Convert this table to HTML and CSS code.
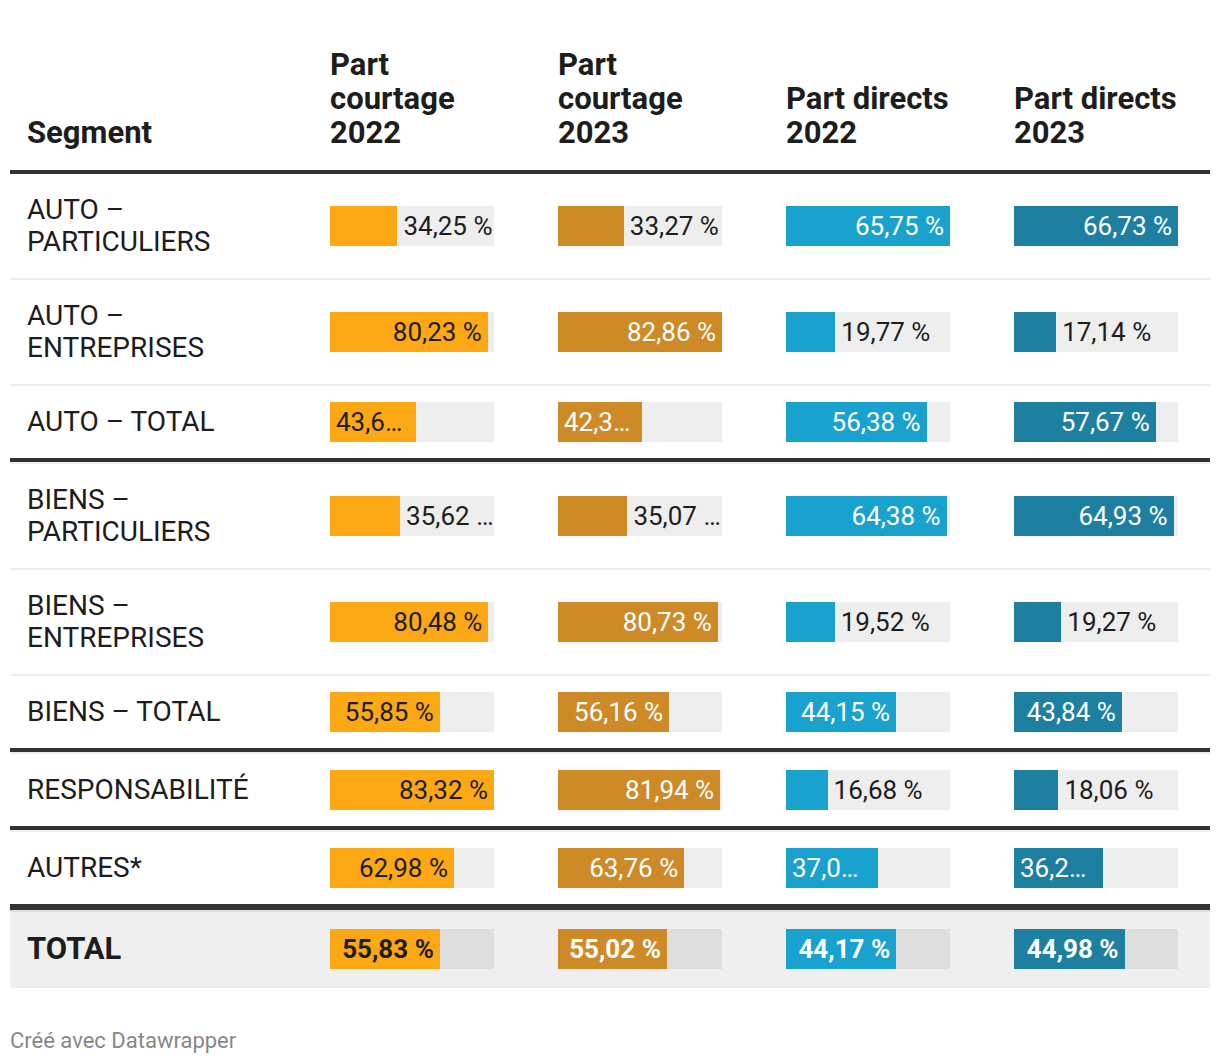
FILE: index.html
```html
<!DOCTYPE html>
<html lang="fr">
<head>
<meta charset="utf-8">
<title>Part courtage / directs</title>
<link rel="stylesheet" href="styles.css">
</head>
<body>
<div class="chart">
  <div class="table">
    <div class="row head">
      <div class="cell label">Segment</div>
      <div class="cell htext">Part<br>courtage<br>2022</div>
      <div class="cell htext">Part<br>courtage<br>2023</div>
      <div class="cell htext">Part directs<br>2022</div>
      <div class="cell htext">Part directs<br>2023</div>
    </div>

    <div class="row">
      <div class="cell label">AUTO –<br>PARTICULIERS</div>
      <div class="cell"><div class="track"><div class="fill c1" style="width:41.11%"></div><span class="val out">34,25 %</span></div></div>
      <div class="cell"><div class="track"><div class="fill c2" style="width:40.15%"></div><span class="val out">33,27 %</span></div></div>
      <div class="cell"><div class="track"><div class="fill c3" style="width:100%"><span class="val in">65,75 %</span></div></div></div>
      <div class="cell"><div class="track"><div class="fill c4" style="width:100%"><span class="val in">66,73 %</span></div></div></div>
    </div>

    <div class="row">
      <div class="cell label">AUTO –<br>ENTREPRISES</div>
      <div class="cell"><div class="track"><div class="fill c1" style="width:96.29%"><span class="val in">80,23 %</span></div></div></div>
      <div class="cell"><div class="track"><div class="fill c2" style="width:100%"><span class="val in">82,86 %</span></div></div></div>
      <div class="cell"><div class="track"><div class="fill c3" style="width:30.07%"></div><span class="val out">19,77 %</span></div></div>
      <div class="cell"><div class="track"><div class="fill c4" style="width:25.69%"></div><span class="val out">17,14 %</span></div></div>
    </div>

    <div class="row sep">
      <div class="cell label">AUTO – TOTAL</div>
      <div class="cell"><div class="track"><div class="fill c1" style="width:52.35%"><span class="val in">43,62 %</span></div></div></div>
      <div class="cell"><div class="track"><div class="fill c2" style="width:51.09%"><span class="val in">42,33 %</span></div></div></div>
      <div class="cell"><div class="track"><div class="fill c3" style="width:85.75%"><span class="val in">56,38 %</span></div></div></div>
      <div class="cell"><div class="track"><div class="fill c4" style="width:86.42%"><span class="val in">57,67 %</span></div></div></div>
    </div>

    <div class="row">
      <div class="cell label">BIENS –<br>PARTICULIERS</div>
      <div class="cell"><div class="track"><div class="fill c1" style="width:42.75%"></div><span class="val out">35,62 %</span></div></div>
      <div class="cell"><div class="track"><div class="fill c2" style="width:42.32%"></div><span class="val out">35,07 %</span></div></div>
      <div class="cell"><div class="track"><div class="fill c3" style="width:97.92%"><span class="val in">64,38 %</span></div></div></div>
      <div class="cell"><div class="track"><div class="fill c4" style="width:97.30%"><span class="val in">64,93 %</span></div></div></div>
    </div>

    <div class="row">
      <div class="cell label">BIENS –<br>ENTREPRISES</div>
      <div class="cell"><div class="track"><div class="fill c1" style="width:96.59%"><span class="val in">80,48 %</span></div></div></div>
      <div class="cell"><div class="track"><div class="fill c2" style="width:97.43%"><span class="val in">80,73 %</span></div></div></div>
      <div class="cell"><div class="track"><div class="fill c3" style="width:29.69%"></div><span class="val out">19,52 %</span></div></div>
      <div class="cell"><div class="track"><div class="fill c4" style="width:28.88%"></div><span class="val out">19,27 %</span></div></div>
    </div>

    <div class="row sep">
      <div class="cell label">BIENS – TOTAL</div>
      <div class="cell"><div class="track"><div class="fill c1" style="width:67.03%"><span class="val in">55,85 %</span></div></div></div>
      <div class="cell"><div class="track"><div class="fill c2" style="width:67.78%"><span class="val in">56,16 %</span></div></div></div>
      <div class="cell"><div class="track"><div class="fill c3" style="width:67.15%"><span class="val in">44,15 %</span></div></div></div>
      <div class="cell"><div class="track"><div class="fill c4" style="width:65.70%"><span class="val in">43,84 %</span></div></div></div>
    </div>

    <div class="row sep">
      <div class="cell label">RESPONSABILITÉ</div>
      <div class="cell"><div class="track"><div class="fill c1" style="width:100%"><span class="val in">83,32 %</span></div></div></div>
      <div class="cell"><div class="track"><div class="fill c2" style="width:98.89%"><span class="val in">81,94 %</span></div></div></div>
      <div class="cell"><div class="track"><div class="fill c3" style="width:25.37%"></div><span class="val out">16,68 %</span></div></div>
      <div class="cell"><div class="track"><div class="fill c4" style="width:27.06%"></div><span class="val out">18,06 %</span></div></div>
    </div>

    <div class="row last">
      <div class="cell label">AUTRES*</div>
      <div class="cell"><div class="track"><div class="fill c1" style="width:75.59%"><span class="val in">62,98 %</span></div></div></div>
      <div class="cell"><div class="track"><div class="fill c2" style="width:76.95%"><span class="val in">63,76 %</span></div></div></div>
      <div class="cell"><div class="track"><div class="fill c3" style="width:56.30%"><span class="val in">37,02 %</span></div></div></div>
      <div class="cell"><div class="track"><div class="fill c4" style="width:54.31%"><span class="val in">36,24 %</span></div></div></div>
    </div>

    <div class="row total">
      <div class="cell label">TOTAL</div>
      <div class="cell"><div class="track"><div class="fill c1" style="width:67.01%"><span class="val in">55,83 %</span></div></div></div>
      <div class="cell"><div class="track"><div class="fill c2" style="width:66.40%"><span class="val in">55,02 %</span></div></div></div>
      <div class="cell"><div class="track"><div class="fill c3" style="width:67.18%"><span class="val in">44,17 %</span></div></div></div>
      <div class="cell"><div class="track"><div class="fill c4" style="width:67.41%"><span class="val in">44,98 %</span></div></div></div>
    </div>
  </div>
  <div class="footer">Créé avec Datawrapper</div>
</div>
</body>
</html>
```

FILE: styles.css
```css
* { box-sizing: border-box; }

html, body {
  margin: 0;
  padding: 0;
  background: #ffffff;
}

body {
  font-family: Roboto, "Liberation Sans", sans-serif;
  color: #1d1d1d;
}

.chart {
  padding: 48px 10px 0 10px;
  width: 1220px;
}

.table {
  display: flex;
  flex-direction: column;
}

.row {
  display: grid;
  grid-template-columns: 320px 228px 228px 228px 196px;
  align-items: center;
  border-bottom: 2px solid #eeeeee;
}

.row.sep {
  border-bottom: 4px solid #333333;
}

.row.sep + .row {
  border-top: 2px solid #eeeeee;
}

.row.last {
  border-bottom: none;
}

.row.head {
  align-items: end;
  border-bottom: 4px solid #333333;
  padding-bottom: 20px;
  font-weight: 700;
  font-size: 31px;
  line-height: 34px;
}

.row.head .label {
  font-size: 31px;
  line-height: 34px;
  padding: 0 0 0 17px;
}

.htext {
  white-space: nowrap;
}

.label {
  font-size: 28px;
  line-height: 32px;
  padding: 20px 0 20px 17px;
}

.track {
  width: 164px;
  height: 40px;
  background: #eeeeee;
  display: flex;
  align-items: stretch;
}

.fill {
  flex: none;
  display: flex;
  min-width: 0;
  overflow: hidden;
}

.c1 { background: #fca815; color: #1d1d1d; }
.c2 { background: #cf8a28; color: #ffffff; }
.c3 { background: #1aa2cf; color: #ffffff; }
.c4 { background: #1e80a1; color: #ffffff; }

.val {
  font-size: 26px;
  line-height: 40px;
  white-space: nowrap;
  overflow: hidden;
  text-overflow: ellipsis;
  min-width: 0;
}

.val.in {
  width: 100%;
  padding: 0 6px;
  text-align: right;
}

.val.out {
  flex: 1 1 auto;
  padding: 0 0 0 6px;
  color: #1d1d1d;
}

.row.total {
  border-bottom: none;
  border-top: 6px solid #333333;
  background: #efefef;
  box-shadow: inset 0 2px 0 #dddddd;
}

.row.total .label {
  font-weight: 700;
  font-size: 31px;
  padding: 23px 0 23px 17px;
}

.row.total .track {
  background: #dedede;
}

.row.total .val {
  font-weight: 700;
}

.footer {
  margin-top: 40px;
  font-size: 22px;
  line-height: 25px;
  color: #888888;
}
```
